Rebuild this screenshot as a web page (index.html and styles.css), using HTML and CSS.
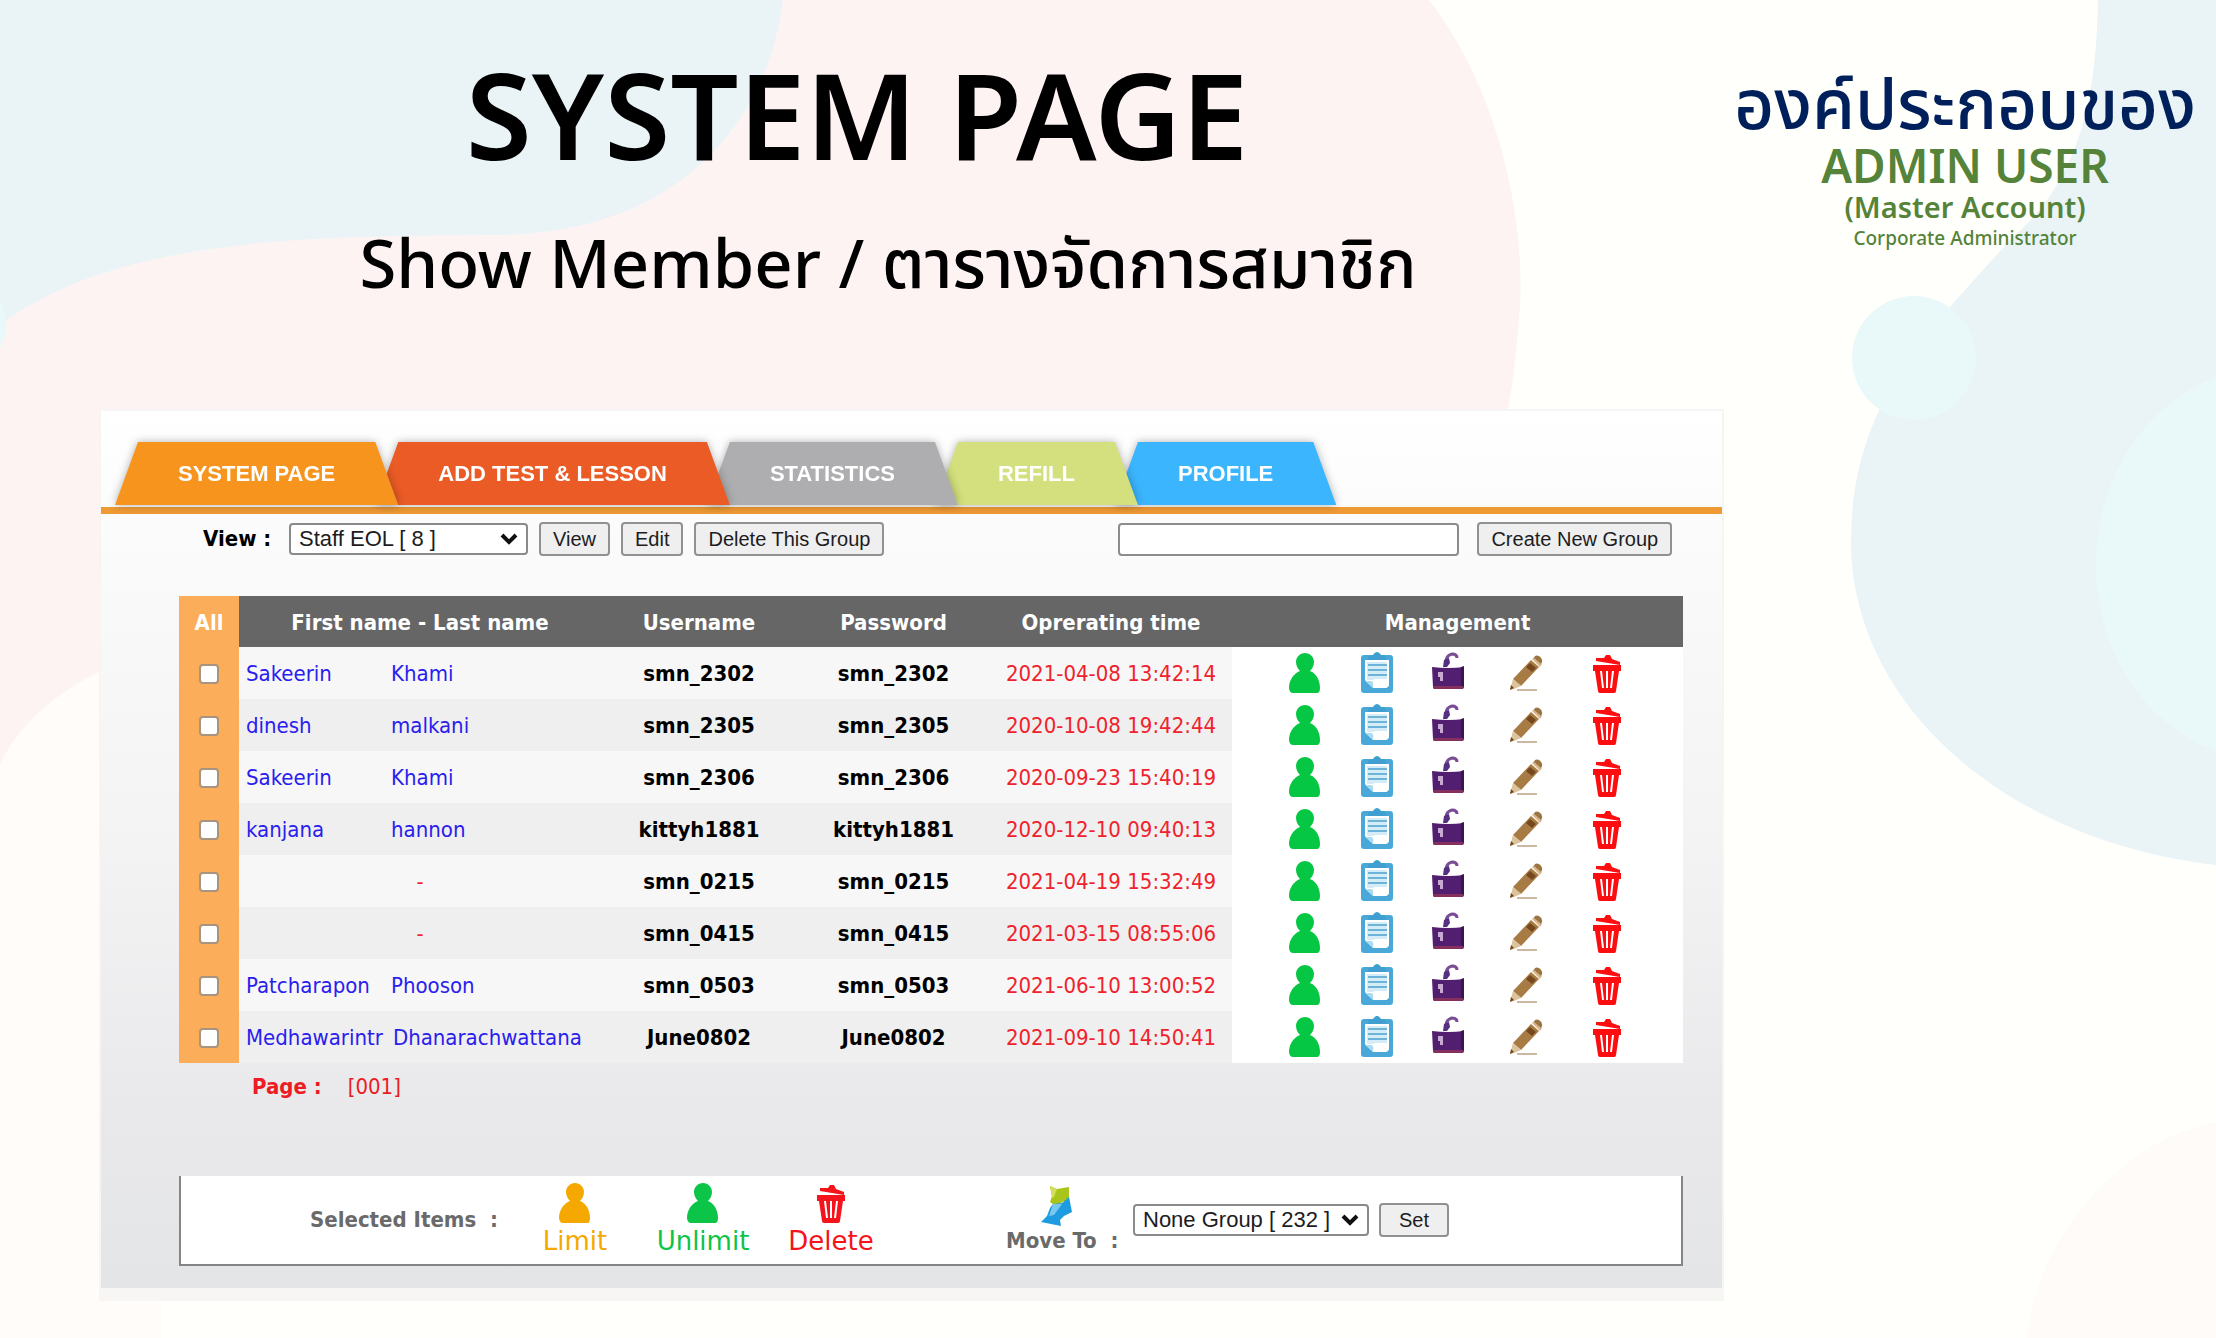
FILE: index.html
```html
<!DOCTYPE html>
<html lang="th">
<head>
<meta charset="utf-8">
<title>System Page - Show Member</title>
<link rel="stylesheet" href="styles.css">
</head>
<body>
<svg class="backdrop" viewBox="0 0 2216 1338" preserveAspectRatio="xMidYMin slice" aria-hidden="true">
  <path fill="#fffcf9" d="M0 600H162V1338H0Z"/>
  <path fill="#fef3f3" d="M0 0H1429C1500 90 1530 230 1518 330C1512 400 1500 500 1440 600L200 640C110 655 30 700 0 765Z"/>
  <path fill="#eaf4f7" d="M0 0H783C770 110 690 232 500 235C320 236 120 235 0 325Z"/>
  <circle fill="#e9f8f9" cx="-40" cy="325" r="46"/>
  <path fill="#eaf4f7" d="M2098 0C2096 100 2080 180 2010 240C1930 330 1852 400 1851 540C1850 700 2000 840 2216 865V0Z"/>
  <circle fill="#e9f8f9" cx="1914" cy="358" r="62"/>
  <path fill="#e9f8f9" d="M2216 377C2056 440 2056 690 2216 751Z"/>
  <path fill="#fefbf9" d="M2216 1122C2120 1140 2035 1240 2027 1338H2216Z"/>
</svg>

<svg class="sprites" aria-hidden="true">
  <symbol id="person" viewBox="0 0 32 42">
    <path fill="currentColor" d="M16 1c5 0 9 4 9 9 0 4-2 7-4 9 6 2 10 9 10 17 0 3-1 5-3 5H4c-2 0-4-2-4-5C0 28 5 21 11 19c-2-2-4-5-4-9 0-5 4-9 9-9z"/>
  </symbol>
  <symbol id="clipboard" viewBox="0 0 34 42">
    <rect x="1" y="3" width="32" height="38" rx="3" fill="#49a8d8"/>
    <path fill="#fff" d="M5 8h24v24q0 4-4 4H13L5 28z"/>
    <path fill="#d3ecf8" d="M7 10h20v18H7z"/>
    <path fill="#3f9fd0" d="M8 6c0-2 3-3 5-3 1-2 3-3 4-3s3 1 4 3c2 0 5 1 5 3v2H8z"/>
    <path stroke="#6db4d8" stroke-width="2" d="M8 13h19M8 18h19M8 23h19"/>
    <path fill="#fff" d="M14 27h14v5q0 4-4 4H14z"/>
    <path fill="#a8daf1" d="M5 29h6q3 0 2 7z"/>
  </symbol>
  <symbol id="lock" viewBox="0 0 34 42">
    <path fill="none" stroke="#7a4e96" stroke-width="3" d="M15 13c-1-5 1-10 6-11 3 0 5 1 5 4"/>
    <path fill="#55307f" d="M13 8l5-2 1 5-3 4h-4z"/>
    <path fill="#521e70" d="M1 15q16 2 32 0v20q0 2-2 2H4q-2 0-2-2z"/>
    <path fill="#3a1650" d="M30 15l3-1v20l-3 1z"/>
    <path fill="#85305f" d="M2 34h30v1q0 2-2 2H4q-2 0-2-2z"/>
    <path fill="#c6a8d0" d="M7 20h5v9H9v-4H7z"/>
  </symbol>
  <symbol id="pencil" viewBox="0 0 34 42">
    <path fill="#a87b45" d="M22 8l8 7L12 34l-8-7z"/>
    <path fill="#75491d" d="M21 11l6 5-4 4-6-5z"/>
    <path fill="#d9b98a" d="M23 7l2-2 8 7-2 3z"/>
    <path fill="#9a7443" d="M26 4c3-2 8 2 7 6l-1 2-7-6z"/>
    <path fill="#dcc39b" d="M4 27l8 7-7 3-4 1z"/>
    <path fill="#6d4a22" d="M2 33l3 3-4 2z"/>
    <path stroke="#cdb8a0" stroke-width="2" d="M8 38h20"/>
  </symbol>
  <symbol id="trash" viewBox="0 0 28 42">
    <path fill="currentColor" d="M3 6l8 0 2-3h4l2 4 8 3v3L3 9z"/>
    <path fill="currentColor" d="M0 13h28v6h-2l-3 20q0 2-2 2H7q-2 0-2-2L2 19H0z"/>
    <path stroke="#fff" stroke-width="2" d="M8 19l2 17M14 19v17M20 19l-2 17"/>
  </symbol>
  <symbol id="move" viewBox="0 0 34 42">
    <path fill="#a9c41a" d="M10 1l7 3 12-2v16l-5-2-8 5-6-4 2-6z"/>
    <path fill="#d3de5a" d="M10 1l7 3-3 8-2 1z"/>
    <path fill="#1f9be0" d="M13 19l9-1 7-6 3 15-8 4-4 4 1 6L1 37l6-6 3-8z"/>
    <path fill="#79c8f2" d="M13 19h9l-8 11-5 1z"/>
  </symbol>
</svg>

<div class="slide">
  <header class="masthead">
    <div class="headings">
      <h1>SYSTEM PAGE</h1>
      <h2>Show Member / ตารางจัดการสมาชิก</h2>
    </div>
    <div class="role">
      <p class="role-th">องค์ประกอบของ</p>
      <p class="role-name">ADMIN USER</p>
      <p class="role-account">(Master Account)</p>
      <p class="role-desc">Corporate Administrator</p>
    </div>
  </header>

  <main class="panel">
    <div class="panel-body">
      <nav class="tabs">
        <div class="tab-wrap"><a class="tab tab-system" href="#">SYSTEM PAGE</a></div>
        <div class="tab-wrap"><a class="tab tab-lesson" href="#">ADD TEST &amp; LESSON</a></div>
        <div class="tab-wrap"><a class="tab tab-stats" href="#">STATISTICS</a></div>
        <div class="tab-wrap"><a class="tab tab-refill" href="#">REFILL</a></div>
        <div class="tab-wrap"><a class="tab tab-profile" href="#">PROFILE</a></div>
      </nav>

      <div class="toolbar">
        <label class="view-label" for="group">View :</label>
        <select id="group" class="group-select"><option>Staff EOL [ 8 ]</option></select>
        <button type="button">View</button>
        <button type="button">Edit</button>
        <button type="button">Delete This Group</button>
        <input class="new-group" type="text" aria-label="New group name">
        <button type="button">Create New Group</button>
      </div>

      <table class="members">
        <colgroup><col class="c-all"><col class="c-name"><col class="c-user"><col class="c-pass"><col class="c-time"><col class="c-manage"></colgroup>
        <thead>
          <tr><th class="all">All</th><th>First name - Last name</th><th>Username</th><th>Password</th><th>Oprerating time</th><th>Management</th></tr>
        </thead>
        <tbody id="rows"></tbody>
      </table>

      <p class="pager"><b>Page :</b> <a href="#">[001]</a></p>

      <div class="actions">
        <span class="selected">Selected Items &nbsp;:</span>
        <button type="button" class="action limit"><svg class="icon"><use href="#person"/></svg>Limit</button>
        <button type="button" class="action unlimit"><svg class="icon"><use href="#person"/></svg>Unlimit</button>
        <button type="button" class="action delete"><svg class="icon"><use href="#trash"/></svg>Delete</button>
        <label class="move" for="target"><svg class="icon"><use href="#move"/></svg><span>Move To &nbsp;:</span></label>
        <select id="target" class="target-select"><option>None Group [ 232 ]</option></select>
        <button type="button" class="set">Set</button>
      </div>
    </div>
  </main>
</div>
<script src="members.js"></script>
</body>
</html>
```
FILE: members.js
```js
const members = [
  ["Sakeerin", "Khami", "smn_2302", "2021-04-08 13:42:14"],
  ["dinesh", "malkani", "smn_2305", "2020-10-08 19:42:44"],
  ["Sakeerin", "Khami", "smn_2306", "2020-09-23 15:40:19"],
  ["kanjana", "hannon", "kittyh1881", "2020-12-10 09:40:13"],
  ["", "", "smn_0215", "2021-04-19 15:32:49"],
  ["", "", "smn_0415", "2021-03-15 08:55:06"],
  ["Patcharapon", "Phooson", "smn_0503", "2021-06-10 13:00:52"],
  ["Medhawarintr", "Dhanarachwattana", "June0802", "2021-09-10 14:50:41"]
];
const tools = [["person", "Limit"], ["clipboard", "Report"], ["lock", "Unlock"], ["pencil", "Edit"], ["trash", "Delete"]];
const buttons = tools.map(([icon, label]) =>
  `<button type="button" class="tool ${icon}" aria-label="${label}"><svg class="icon"><use href="#${icon}"/></svg></button>`).join("");

document.getElementById("rows").innerHTML = members.map(([first, last, user, time]) => `
  <tr>
    <td class="all"><input type="checkbox" aria-label="Select ${user}"></td>
    <td>${first ? `<a class="name" href="#"><span>${first}</span><span>${last}</span></a>` : `<span class="blank">-</span>`}</td>
    <td class="login">${user}</td>
    <td class="login">${user}</td>
    <td class="time">${time}</td>
    <td class="manage"><div class="tools">${buttons}</div></td>
  </tr>`).join("");
```
FILE: styles.css
```css
* { box-sizing: border-box; }

body {
  margin: 0;
  background: #fffffb;
  color: #000;
  font: 22px/28px "DejaVu Sans Condensed", "Noto Sans", sans-serif;
}

h1, h2, p { margin: 0; }
a { color: inherit; text-decoration: none; }

.backdrop {
  position: absolute;
  inset: 0;
  width: 100%;
  height: 100%;
  z-index: -1;
}
.sprites { position: absolute; width: 0; height: 0; }

.slide {
  min-height: 100vh;
  padding: 36px 20px 34px 99px;
}

/* Titles */
.masthead {
  display: flex;
  justify-content: space-between;
  min-height: 373px;
  font-family: "Noto Sans", "Noto Sans Thai", sans-serif;
  font-weight: 500;
}
.headings { width: 72.3%; text-align: center; }
h1 { font-size: 120px; line-height: 156px; font-weight: 600; }
h2 { margin-top: 26px; padding-left: 62px; font-size: 67px; line-height: 88px; font-weight: 500; }

.role { width: 462px; padding-top: 28px; text-align: center; color: #558339; white-space: nowrap; }
.role-th { font-size: 69px; line-height: 76px; color: #00205b; }
.role-name { font-size: 46px; line-height: 50px; font-weight: 600; }
.role-account { font-size: 29px; line-height: 34px; font-weight: 600; }
.role-desc { font-size: 19px; line-height: 28px; }

/* Panel */
.panel {
  width: 77.5%;
  padding-bottom: 13px;
  background: #f8f6f4;
}
.panel-body {
  padding: 31px 0 22px;
  border: 2px solid #f6f4f4;
  border-bottom: 0;
  background: linear-gradient(#fff 0, #fafafa 18%, #f3f3f4 50%, #e9e9eb 80%, #e4e5e7 100%);
}

.tabs {
  display: flex;
  padding: 0 14px 2px;
  border-bottom: 7px solid #ee9a35;
}
.tab-wrap { filter: drop-shadow(0 0 4px rgba(0, 0, 0, .3)); margin-right: -23px; }
.tab-wrap:nth-child(1) { z-index: 5; }
.tab-wrap:nth-child(2) { z-index: 4; }
.tab-wrap:nth-child(3) { z-index: 3; }
.tab-wrap:nth-child(4) { z-index: 2; }
.tab {
  display: block;
  padding: 0 63px;
  color: #fff;
  font: bold 22px/63px "Liberation Sans", Arial, sans-serif;
  white-space: nowrap;
  clip-path: polygon(23px 0, calc(100% - 23px) 0, 100% 100%, 0 100%);
}
.tab-system { background: #f7941d; }
.tab-lesson { background: #ea5b26; }
.tab-stats { background: #aeaeb0; }
.tab-refill { background: #d3e07d; }
.tab-profile { background: #3bb5fd; }

button, select, input { font: 20px/24px "Liberation Sans", Arial, sans-serif; color: #1c1c22; }
.toolbar {
  display: flex;
  align-items: center;
  padding: 8px 50px 0 102px;
}
.toolbar button, .set {
  height: 34px;
  padding: 0 12px;
  border: 2px solid #919191;
  border-radius: 4px;
  background: #efefef;
}
.toolbar button { margin-left: 11px; }
.view-label { width: 86px; font-weight: bold; }
select {
  appearance: none;
  height: 32px;
  padding: 0 8px;
  border: 2px solid #8a8a8a;
  border-radius: 4px;
  background: #fff url("data:image/svg+xml,%3Csvg xmlns='http://www.w3.org/2000/svg' width='20' height='14'%3E%3Cpath d='M3 3l7 7 7-7' fill='none' stroke='%23111' stroke-width='4'/%3E%3C/svg%3E") no-repeat right 7px center;
  font-size: 22px;
}
.group-select { width: 239px; }
.new-group {
  width: 341px;
  height: 33px;
  margin-left: auto;
  border: 2px solid #8c8c8c;
  border-radius: 4px;
  background: #fff;
}
.toolbar .new-group + button { margin-left: 18px; }

/* Member table */
.members {
  width: calc(100% - 117px);
  margin: 40px 39px 0 78px;
  border-collapse: collapse;
  table-layout: fixed;
}
.c-all { width: 60px; }
.c-name { width: 362px; }
.c-user { width: 196px; }
.c-pass { width: 193px; }
.c-time { width: 242px; }
th {
  height: 51px;
  padding: 2px 0 0;
  background: #666;
  color: #fff;
  font-weight: bold;
}
td { height: 52px; padding: 2px 0 0; text-align: center; background: #f7f7f7; }
tr:nth-child(even) td { background: #efefef; }
th.all, tr td.all, tr:nth-child(even) td.all { background: #fbad5a; }
tr td.manage, tr:nth-child(even) td.manage { padding-top: 0; background: #fff; }
.all input {
  appearance: none;
  display: block;
  width: 20px;
  height: 20px;
  margin: 0 auto;
  border: 2px solid #a8937c;
  border-radius: 4px;
  background: #fff;
}
.name {
  display: grid;
  grid-template-columns: minmax(135px, max-content) max-content;
  column-gap: 10px;
  padding-left: 7px;
  color: #2a20ee;
  text-align: left;
}
.login { font-weight: bold; }
.time, .blank { color: #f0222c; }
.tools { display: grid; grid-template-columns: 72px 71px 71px 86px 76px; padding-left: 37px; }
.tool { height: 42px; padding: 0; border: 0; background: none; }
.icon { display: block; width: 34px; height: 42px; margin: 0 auto; }
.tool.person { color: #06c744; }
.tool.trash { color: #fc0d10; }

.pager { display: flex; gap: 26px; padding: 10px 0 0 151px; color: #ec1c24; }

/* Bulk actions */
.actions {
  display: flex;
  align-items: center;
  height: 90px;
  margin: 75px 39px 0 78px;
  border: 2px solid #858585;
  border-top: 0;
  background: #fff;
  color: #6a6a6a;
  font-weight: bold;
}
.selected { width: 361px; padding-left: 129px; white-space: nowrap; }
.action {
  padding: 0;
  border: 0;
  background: none;
  font: 26px/34px "DejaVu Sans", Verdana, sans-serif;
}
.limit { width: 66px; color: #f5a800; }
.unlimit { width: 104px; margin-left: 43px; color: #0cc447; }
.delete { width: 88px; margin-left: 32px; color: #f5141c; }
.move { width: 127px; margin-left: 131px; }
.move .icon { margin-left: 34px; }
.target-select { width: 236px; }
.set { width: 70px; margin-left: 10px; }
```
